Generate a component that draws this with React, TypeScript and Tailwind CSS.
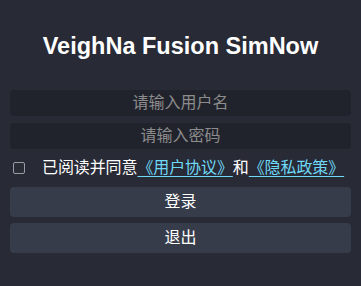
export default function App() {
  const cjk = { fontFamily: '"Liberation Sans", "Noto Sans CJK SC", sans-serif' };
  return (
    <div
      className="w-[361px] h-[286px] bg-[#282a36] flex flex-col px-[10px] overflow-hidden"
      style={cjk}
    >
      <div className="pt-[35px] h-[23px] box-content text-center text-white font-bold text-[23.5px] leading-[23px]">
        VeighNa Fusion SimNow
      </div>
      <div className="mt-[32px] flex flex-col gap-[7px]">
        <input
          className="h-[26px] w-full rounded-[4px] bg-[#21232c] text-center text-[16px] text-white placeholder:text-[#8c8c8c] outline-none"
          placeholder="请输入用户名"
        />
        <input
          type="password"
          className="h-[26px] w-full rounded-[4px] bg-[#21232c] text-center text-[16px] text-white placeholder:text-[#8c8c8c] outline-none"
          placeholder="请输入密码"
        />
      </div>
      <div className="mt-[12px] h-[14px] flex items-center">
        <span className="ml-[3px] w-[12px] h-[12px] rounded-[2px] border border-[#9a9ca3] bg-[#2a2c36]" />
        <span className="ml-[17px] text-[16px] leading-[16px] text-white whitespace-nowrap tracking-[-0.1px]">
          已阅读并同意
          <span className="text-[#6fd8f5] underline underline-offset-[3px]">《用户协议》</span>
          和
          <span className="text-[#6fd8f5] underline underline-offset-[3px]">《隐私政策》</span>
        </span>
      </div>
      <div className="mt-[12px] flex flex-col gap-[6px]">
        <button className="h-[30px] w-full rounded-[4px] bg-[#363c4a] text-white text-[16px]">
          登录
        </button>
        <button className="h-[30px] w-full rounded-[4px] bg-[#363c4a] text-white text-[16px]">
          退出
        </button>
      </div>
    </div>
  );
}
